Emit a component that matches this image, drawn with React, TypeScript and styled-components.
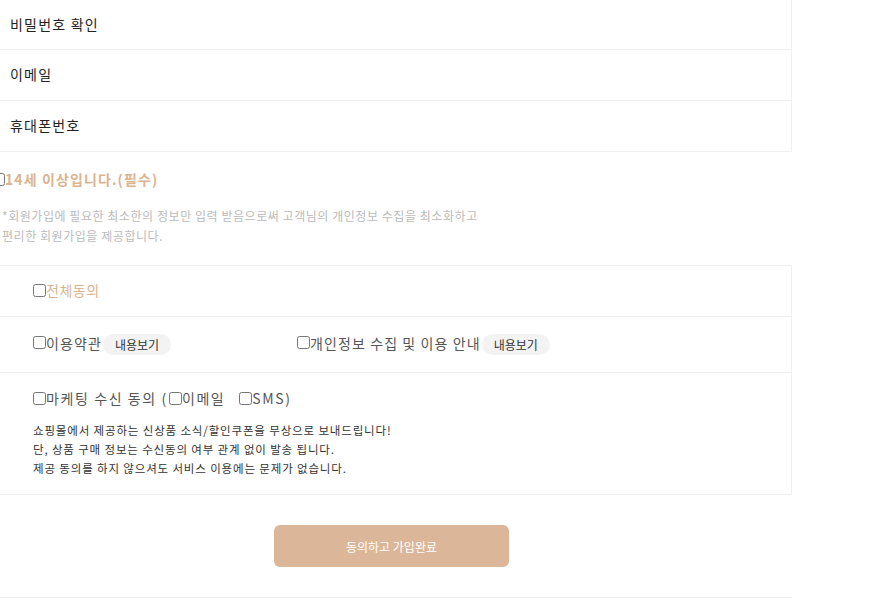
import React from "react";
import styled, { createGlobalStyle } from "styled-components";

const Global = createGlobalStyle`
  html, body { margin: 0; padding: 0; background: #fff; }
  body { font-family: "Noto Sans CJK KR", "Noto Sans", sans-serif; color: #333; overflow: hidden; }
  * { box-sizing: border-box; }
`;

const Page = styled.div`
  width: 792px;
`;

const FieldTable = styled.div`
  border-right: 1px solid #f0f0f0;
`;

const FieldRow = styled.div<{ $first?: boolean }>`
  height: ${(p) => (p.$first ? 50 : 51)}px;
  display: flex;
  align-items: center;
  padding-left: 10px;
  border-bottom: 1px solid #f0f0f0;
  font-size: 14px;
  font-weight: 400;
  color: #222;
  letter-spacing: 1.2px;
  padding-bottom: ${(p) => (p.$first ? 1 : 2)}px;
`;

const Check = styled.input.attrs({ type: "checkbox" })`
  margin: 0;
  width: 13px;
  height: 13px;
  flex: none;
`;

const AgeRow = styled.label`
  display: flex;
  align-items: center;
  margin-top: 19px;
  height: 16px;
  font-size: 14px;
  font-weight: 700;
  color: #dcb391;
  letter-spacing: 1.1px;
  margin-left: -8px;
`;

const Note = styled.p`
  margin: 19px 0 0 2px;
  font-size: 12px;
  line-height: 20px;
  color: #bbb;
  letter-spacing: 0.55px;
`;

const AgreeBox = styled.div`
  margin-top: 19px;
  border-top: 1px solid #f0f0f0;
  border-right: 1px solid #f0f0f0;
`;

const AgreeRow = styled.div<{ $h: number }>`
  height: ${(p) => p.$h}px;
  border-bottom: 1px solid #f0f0f0;
  padding-left: 33px;
`;

const AllAgree = styled.label`
  display: flex;
  align-items: center;
  padding-top: 14px;
  font-size: 14px;
  font-weight: 400;
  color: #dcb391;
  letter-spacing: 0.5px;
`;

const TermsGrid = styled.div`
  display: grid;
  grid-template-columns: 264px 1fr;
  padding-top: 13px;
`;

const TermItem = styled.label`
  display: flex;
  align-items: center;
  font-size: 14px;
  color: #555;
  letter-spacing: 1.1px;
`;

const ViewChip = styled.button`
  margin-left: 1px;
  border: none;
  background: #f3f3f3;
  border-radius: 11px;
  height: 21px;
  padding: 0 12px;
  font-family: inherit;
  font-size: 12px;
  color: #333;
  margin-top: 4px;
  letter-spacing: 0;
`;

const MarketingLine = styled.div`
  display: flex;
  align-items: center;
  padding-top: 15px;
  font-size: 14px;
  color: #555;
  letter-spacing: 1.6px;
`;

const Gap = styled.span<{ $w: number }>`
  display: inline-block;
  width: ${(p) => p.$w}px;
`;

const Desc = styled.p`
  margin: 13px 0 0 0;
  font-size: 11.5px;
  line-height: 19px;
  color: #333;
  letter-spacing: 0.85px;
`;

const ButtonArea = styled.div`
  display: flex;
  justify-content: center;
  padding: 30px 9px 30px 0;
  border-bottom: 1px solid #f0f0f0;
`;

const SubmitButton = styled.button`
  width: 235px;
  height: 42px;
  border: none;
  border-radius: 6px;
  background: #dbb698;
  color: #fff;
  font-family: inherit;
  font-size: 12px;
`;

export default function App() {
  return (
    <Page>
      <Global />
      <FieldTable>
        <FieldRow $first>비밀번호 확인</FieldRow>
        <FieldRow>이메일</FieldRow>
        <FieldRow>휴대폰번호</FieldRow>
      </FieldTable>
      <AgeRow>
        <Check />
        14세 이상입니다.(필수)
      </AgeRow>
      <Note>
        *회원가입에 필요한 최소한의 정보만 입력 받음으로써 고객님의 개인정보 수집을 최소화하고
        <br />
        편리한 회원가입을 제공합니다.
      </Note>
      <AgreeBox>
        <AgreeRow $h={51}>
          <AllAgree>
            <Check />
            전체동의
          </AllAgree>
        </AgreeRow>
        <AgreeRow $h={56}>
          <TermsGrid>
            <TermItem>
              <Check />
              이용약관
              <ViewChip>내용보기</ViewChip>
            </TermItem>
            <TermItem>
              <Check />
              개인정보 수집 및 이용 안내
              <ViewChip>내용보기</ViewChip>
            </TermItem>
          </TermsGrid>
        </AgreeRow>
        <AgreeRow $h={122}>
          <MarketingLine>
            <Check />
            마케팅 수신 동의 (
            <Gap $w={1} />
            <Check />
            이메일
            <Gap $w={14} />
            <Check />
            SMS)
          </MarketingLine>
          <Desc>
            쇼핑몰에서 제공하는 신상품 소식/할인쿠폰을 무상으로 보내드립니다!
            <br />
            단, 상품 구매 정보는 수신동의 여부 관계 없이 발송 됩니다.
            <br />
            제공 동의를 하지 않으셔도 서비스 이용에는 문제가 없습니다.
          </Desc>
        </AgreeRow>
      </AgreeBox>
      <ButtonArea>
        <SubmitButton>동의하고 가입완료</SubmitButton>
      </ButtonArea>
    </Page>
  );
}
